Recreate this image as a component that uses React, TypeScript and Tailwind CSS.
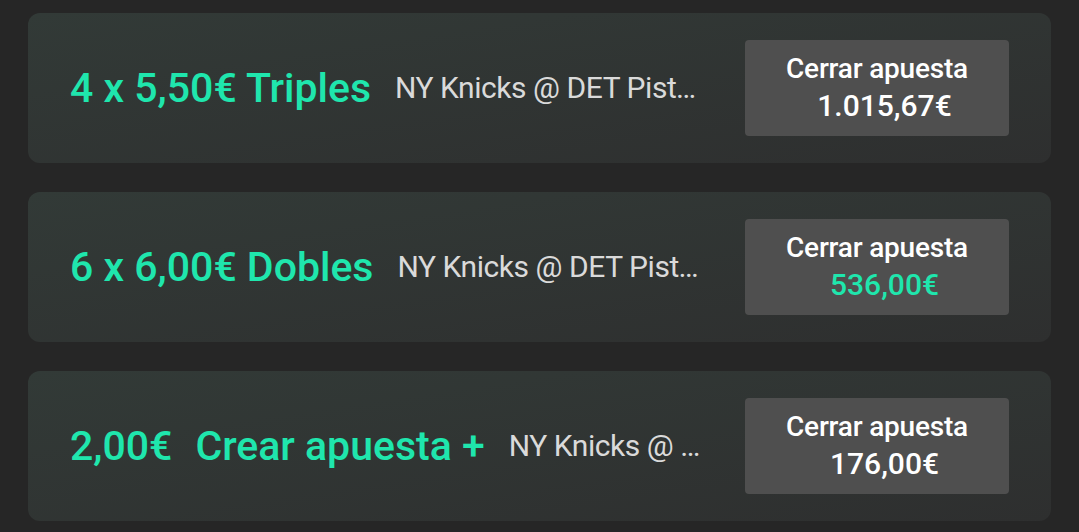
import React from "react";

type Bet = {
  green: React.ReactNode;
  match: string;
  amount: string;
  amountGreen?: boolean;
};

const bets: Bet[] = [
  { green: <span>4 x 5,50€ Triples</span>, match: "NY Knicks @ DET Pistons", amount: "1.015,67€" },
  { green: <span>6 x 6,00€ Dobles</span>, match: "NY Knicks @ DET Pistons", amount: "536,00€", amountGreen: true },
  {
    green: (
      <span className="flex">
        <span>2,00€</span>
        <span className="ml-[23px]">Crear apuesta +</span>
      </span>
    ),
    match: "NY Knicks @ DET Pistons",
    amount: "176,00€",
  },
];

export default function App() {
  return (
    <div
      className="w-[1079px] h-[532px] bg-[#262626] px-[28px] pt-[13px] flex flex-col gap-[29px] overflow-hidden"
      style={{ fontFamily: "Roboto, 'Noto Sans', sans-serif" }}
    >
      {bets.map((b, i) => (
        <div
          key={i}
          className="h-[150px] shrink-0 rounded-[12px] bg-gradient-to-br from-[#323a37] to-[#2e2f2f] flex items-center pl-[42px] pr-[42px] gap-[38px]"
        >
          <div className="flex-1 min-w-0 flex items-center gap-[24px]">
            <div className="shrink-0 text-[#1fe6ad] text-[41px] font-medium leading-none whitespace-nowrap">
              {b.green}
            </div>
            <div className="min-w-0 truncate text-[#dadada] text-[30px] leading-[40px] tracking-[-0.45px]">
              {b.match}
            </div>
          </div>
          <div className="w-[264px] h-[96px] shrink-0 rounded-[4px] bg-[#4f4f4f] flex flex-col items-center justify-center">
            <div className="text-white text-[28px] font-medium leading-[36px] tracking-[-0.2px]">Cerrar apuesta</div>
            <div
              className={`pl-[15px] text-[30px] font-medium leading-[38px] ${
                b.amountGreen ? "text-[#1fe6ad]" : "text-white"
              }`}
            >
              {b.amount}
            </div>
          </div>
        </div>
      ))}
    </div>
  );
}
